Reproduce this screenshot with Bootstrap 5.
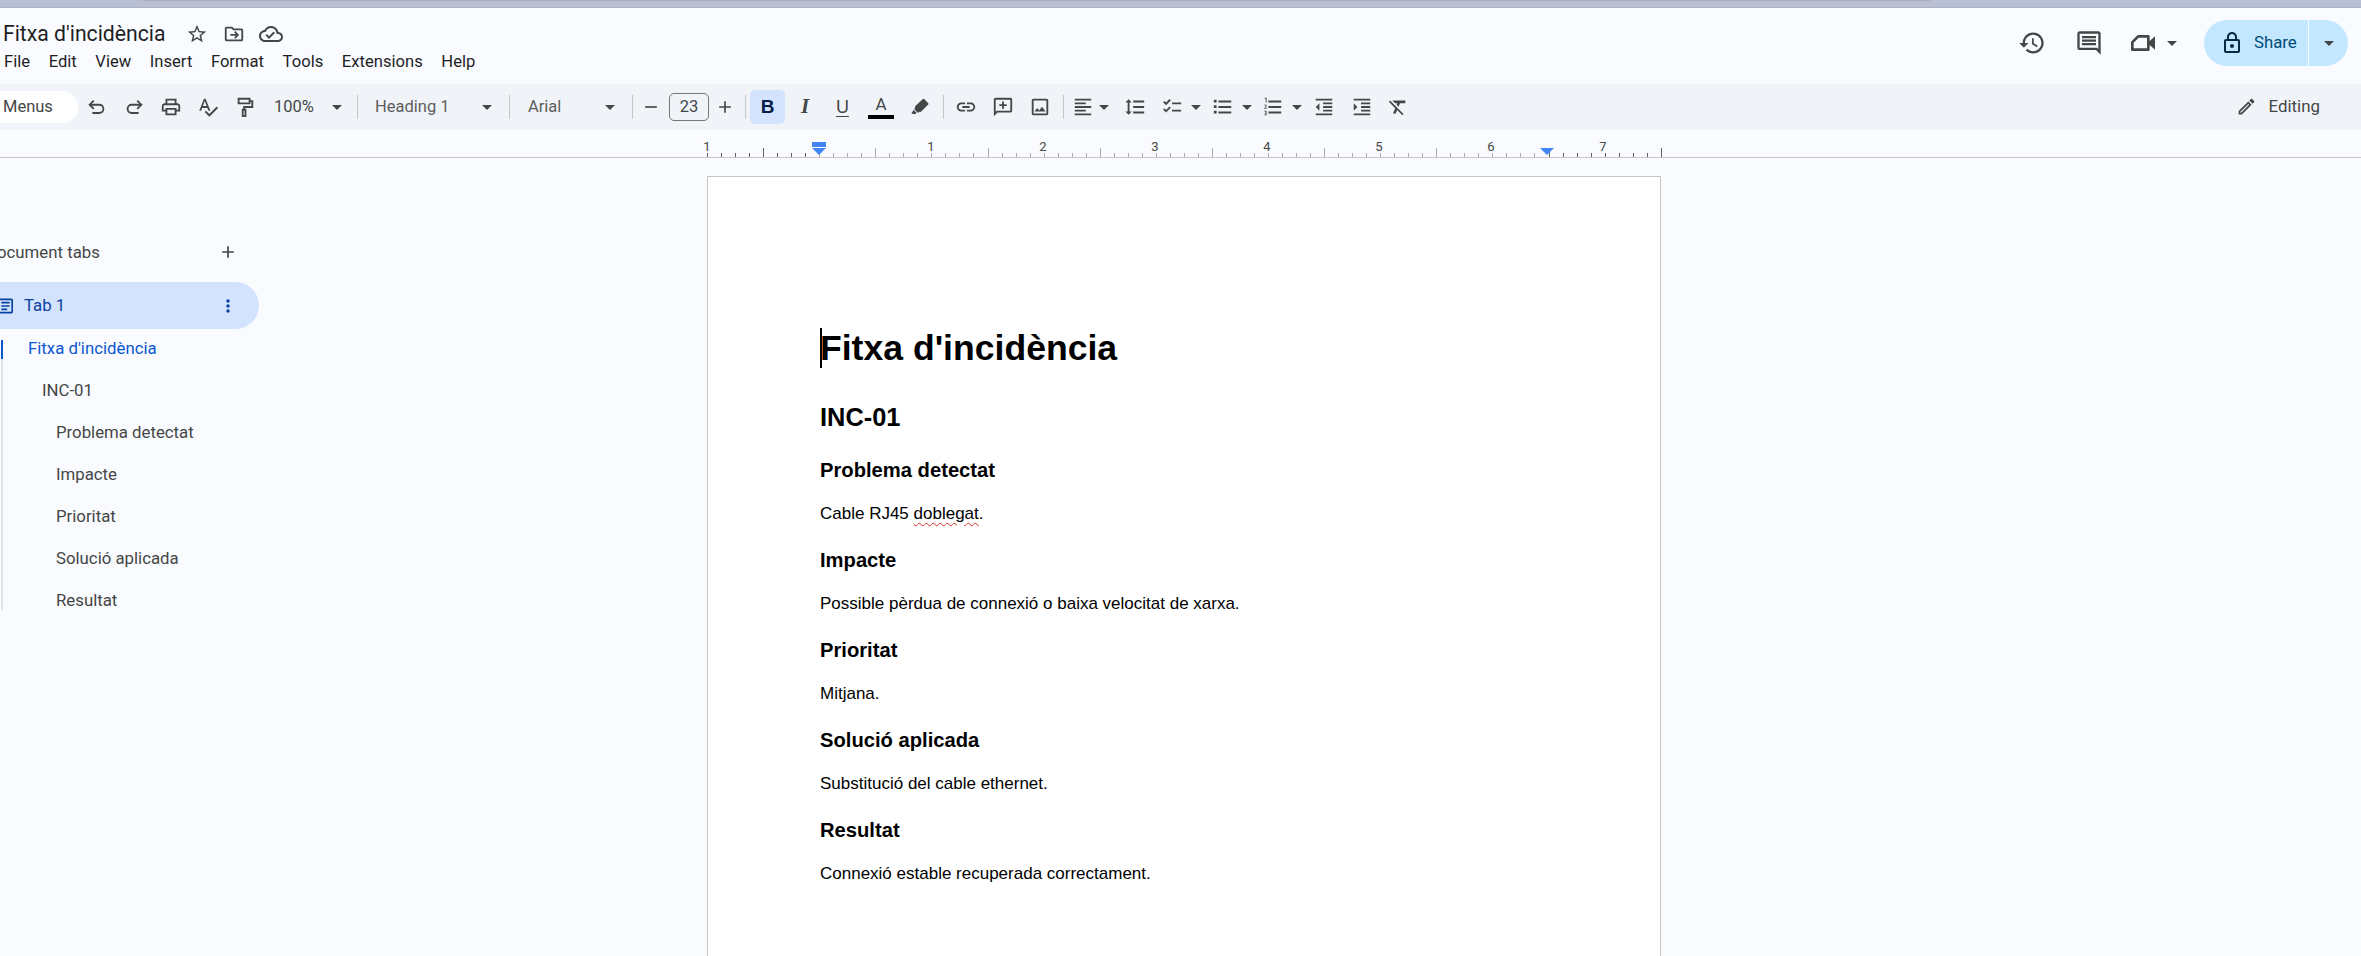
<!DOCTYPE html>
<html lang="en">
<head>
<meta charset="UTF-8">
<title>Fitxa d'incidència</title>
<link href="https://cdn.jsdelivr.net/npm/bootstrap@5.3.0/dist/css/bootstrap.min.css" rel="stylesheet">
<style>
    html, body { height: 956px; overflow: hidden; }
    body { background: #f9fbff; color: #444746; font-family: Roboto, "Liberation Sans", sans-serif; }
    svg { display: block; fill: currentColor; }

    .top-band { height: 8px; background: #b9c0d3; border-bottom: 1px solid #adb3c6; }
    .top-shade { height: 1px; margin: 0 431px 0 143px; background: #a9aebf; }
    .app-head { height: 76px; padding: 12px 13px 0 3px; }
    .doc-title { font-size: 21.2px; line-height: 28px; color: #1f1f1f; width: 175px; }
    .head-ic { width: 37px; height: 28px; color: #444746; }
    .menu-row { font-size: 16.6px; line-height: 24px; color: #1f1f1f; gap: 18.6px; padding: 2px 0 0 1px; }
    .head-right { height: 46px; padding-top: 0; }
    .rt-btn { width: 57px; color: #444746; }
    .cam-btn { width: 60px; }
    .share-btn { width: 144px; height: 46px; background: #c2e7ff; border-radius: 23px; margin-left: 27px; color: #004a77; font-size: 16.8px; font-weight: 450; }
    .share-main { width: 105px; padding-left: 17px; gap: 9px; border-right: 1px solid #f9fbff; height: 46px; }
    .share-drop { width: 39px; }
    .lock-ic { color: #0a2a43; margin-left: -1px; margin-right: 1px; }

    .tool-bar { height: 46px; background: #f0f4f9; font-size: 16.5px; }
    .menus-pill { width: 78px; height: 32px; background: #fff; border-radius: 0 16px 16px 0; padding-left: 3px; flex: none; }
    .tb-btn { width: 37px; height: 34px; flex: none; color: #444746; }
    .tb-sep { width: 1px; height: 24px; background: #c7c7c7; flex: none; }
    .tb-drop { height: 34px; flex: none; color: #444746; }
    .zoom-drop { width: 88px; padding: 0 9px 0 11px; }
    .style-drop { width: 142px; padding: 0 8px 0 17px; color: #5e5e5e; }
    .font-drop { width: 113px; padding: 0 8px 0 18px; color: #5e5e5e; }
    .tri { width: 0; height: 0; border-left: 5px solid transparent; border-right: 5px solid transparent; border-top: 5px solid #444746; flex: none; }
    .tri-slot { width: 10px; flex: none; }
    .size-minus { width: 36px; }
    .size-plus { width: 32px; }
    .size-box { width: 40px; height: 28px; border: 1px solid #747775; border-radius: 5px; font-size: 16.5px; flex: none; }
    .bold-on { width: 35px; background: #d3e3fd; border-radius: 5px; color: #041e49; }
    .glyph-b { font-family: "Liberation Sans", sans-serif; font-weight: 700; font-size: 19px; }
    .glyph-i { font-family: "Liberation Serif", serif; font-weight: 700; font-style: italic; font-size: 21px; width: 40px; }
    .glyph-u { font-family: "Liberation Sans", sans-serif; font-size: 18px; width: 35px; text-decoration: underline; text-underline-offset: 3px; }
    .glyph-a { font-family: "Roboto", sans-serif; font-size: 17px; width: 42px; line-height: 17px; }
    .glyph-a .a-bar { display: block; width: 26px; height: 4px; background: #000; margin-top: 2px; }
    .hl-btn { width: 35px; }
    .ms-5px { margin-left: 5px; }
    .ms-9px { margin-left: 9px; }
    .ms-6px { margin-left: 6px; }
    .ms-3px { margin-left: 3px; }
    .ms-7px { margin-left: 7px; }
    .ms-1px { margin-left: 1px; }
    .w-32px { width: 32px; }
    .w-38px { width: 38px; }
    .w-36px { width: 36px; }
    .w-35px { width: 35px; }
    .edit-mode { margin-left: auto; padding-right: 41px; gap: 11px; font-size: 16.9px; color: #444746; }

    .ruler-strip { height: 28px; border-bottom: 1px solid #c7c7c7; }

    .side-col { width: 707px; flex: none; padding-top: 82px; }
    .side-head { width: 259px; height: 24px; font-size: 16.8px; line-height: 24px; font-weight: 450; color: #444746; padding-right: 21px; margin-bottom: 18px; }
    .side-head span { margin-left: -14px; }
    .tab-pill { width: 259px; height: 47px; background: #d3e3fd; border-radius: 0 24px 24px 0; color: #0842a0; font-size: 16.8px; font-weight: 450; padding-right: 21px; margin-bottom: 11px; }
    .tab-ic { margin-left: -6px; margin-right: 7px; width: 23px; }
    .outline-box { margin-left: 1px; height: 270px; border-left: 2px solid #dde3ea; font-size: 16.8px; color: #444746; }
    .ol-row { line-height: 16px; margin-bottom: 26px; white-space: nowrap; }
    .ol-cur { margin-left: -2px; border-left: 2px solid #0b57d0; height: 19px; margin-bottom: 23px; color: #0b57d0; padding-left: 25px; }
    .ol-l2 { padding-left: 39px; }
    .ol-l3 { padding-left: 53px; }

    .doc-page { width: 954px; height: 800px; flex: none; margin-top: 18px; background: #fff; border: 1px solid #c7c7c7; border-bottom: 0; padding: 141px 0 0 112px; color: #000; font-family: "Liberation Sans", Arial, sans-serif; }
    .doc-page h1 { font-size: 35.6px; line-height: 60px; font-weight: 700; margin: 0 0 19px; }
    .doc-caret { border-left: 2px solid #000; margin-right: -2px; }
    .doc-page h2 { font-size: 25.4px; line-height: 40px; font-weight: 700; margin: 0 0 18px; }
    .doc-page h3 { font-size: 20.2px; line-height: 30px; font-weight: 700; margin: 0 0 17px; }
    .doc-page p { font-size: 17px; line-height: 24px; margin: 0 0 19px; }
    .spell-err { text-decoration: underline wavy #d93025 1px; text-underline-offset: 3px; }
</style>
</head>
<body>

<div class="top-band"><div class="top-shade"></div></div>

<header class="app-head d-flex justify-content-between">
    <div>
        <div class="d-flex align-items-center">
            <div class="doc-title">Fitxa d'incidència</div>
            <div class="head-ic d-flex align-items-center justify-content-center">
                <svg width="22" height="22" viewBox="0 0 24 24"><path d="M22 9.24l-7.19-.62L12 2 9.19 8.63 2 9.24l5.46 4.73L5.82 21 12 17.27 18.18 21l-1.63-7.03L22 9.24zM12 15.4l-3.76 2.27 1-4.28-3.32-2.88 4.38-.38L12 6.1l1.71 4.04 4.38.38-3.32 2.88 1 4.28L12 15.4z"/></svg>
            </div>
            <div class="head-ic d-flex align-items-center justify-content-center">
                <svg width="22" height="22" viewBox="0 0 24 24"><path d="M20 6h-8l-2-2H4c-1.1 0-2 .9-2 2v12c0 1.1.9 2 2 2h16c1.1 0 2-.9 2-2V8c0-1.1-.9-2-2-2zm0 12H4V6h5.17l2 2H20v10zM12.2 10l1.8 2H8v2h6l-1.8 2 1.4 1.2L17.5 13l-3.9-4.2z"/></svg>
            </div>
            <div class="head-ic d-flex align-items-center justify-content-center">
                <svg width="24" height="24" viewBox="0 0 24 24"><path d="M19.35 10.04C18.67 6.59 15.64 4 12 4 9.11 4 6.6 5.64 5.35 8.04 2.34 8.36 0 10.91 0 14c0 3.31 2.69 6 6 6h13c2.76 0 5-2.24 5-5 0-2.64-2.05-4.78-4.65-4.96zM19 18H6c-2.21 0-4-1.79-4-4 0-2.05 1.53-3.76 3.56-3.97l1.07-.11.5-.95C8.08 7.14 9.94 6 12 6c2.62 0 4.88 1.86 5.39 4.43l.3 1.5 1.53.11c1.56.1 2.78 1.41 2.78 2.96 0 1.65-1.35 3-3 3zm-9-3.82l-2.09-2.09L6.5 13.5 10 17l6.01-6.01-1.41-1.41z"/></svg>
            </div>
        </div>
        <div class="menu-row d-flex">
            <span>File</span><span>Edit</span><span>View</span><span>Insert</span><span>Format</span><span>Tools</span><span>Extensions</span><span>Help</span>
        </div>
    </div>
    <div class="head-right d-flex align-items-center">
        <div class="rt-btn d-flex justify-content-center">
            <svg width="28" height="28" viewBox="0 0 24 24"><path d="M13 3c-4.97 0-9 4.03-9 9H1l3.89 3.89.07.14L9 12H6c0-3.87 3.13-7 7-7s7 3.13 7 7-3.13 7-7 7c-1.93 0-3.68-.79-4.94-2.06l-1.42 1.42C8.27 19.99 10.51 21 13 21c4.97 0 9-4.03 9-9s-4.03-9-9-9zm-1 5v5l4.28 2.54.72-1.21-3.5-2.08V8H12z"/></svg>
        </div>
        <div class="rt-btn d-flex justify-content-center">
            <svg width="28" height="28" viewBox="0 0 24 24"><path d="M20 2H4c-1.1 0-2 .9-2 2v12c0 1.1.9 2 2 2h14l4 4V4c0-1.1-.9-2-2-2zm0 15.17L18.83 16H4V4h16v13.17zM6 12h12v2H6zm0-3h12v2H6zm0-3h12v2H6z"/></svg>
        </div>
        <div class="cam-btn d-flex align-items-center justify-content-end gap-2">
            <svg width="32" height="32" viewBox="0 0 24 24"><path d="M8 6h8a1 1 0 0 1 1 1v3.5l4-3.5v10l-4-3.5V17a1 1 0 0 1-1 1H4a1 1 0 0 1-1-1v-6zm.8 2L5 11.8V16h10V8z"/></svg>
            <span class="tri"></span>
        </div>
        <div class="share-btn d-flex align-items-center">
            <div class="share-main d-flex align-items-center">
                <svg class="lock-ic" width="24" height="24" viewBox="0 0 24 24"><path d="M18 8h-1V6c0-2.76-2.24-5-5-5S7 3.24 7 6v2H6c-1.1 0-2 .9-2 2v10c0 1.1.9 2 2 2h12c1.1 0 2-.9 2-2V10c0-1.1-.9-2-2-2zM9 6c0-1.66 1.34-3 3-3s3 1.34 3 3v2H9V6zm9 14H6V10h12v10zm-6-3c1.1 0 2-.9 2-2s-.9-2-2-2-2 .9-2 2 .9 2 2 2z"/></svg>
                <span>Share</span>
            </div>
            <div class="share-drop d-flex justify-content-center"><span class="tri"></span></div>
        </div>
    </div>
</header>

<div class="tool-bar d-flex align-items-center">
    <div class="menus-pill d-flex align-items-center">Menus</div>

    <div class="tb-btn d-flex align-items-center justify-content-center">
        <svg width="22" height="22" viewBox="0 0 24 24" fill="none" stroke="currentColor" stroke-width="2"><path d="M4.5 9.5h10a4.5 4.5 0 0 1 0 9H7" fill="none"/><path d="M8.5 5 4 9.5 8.5 14" fill="none"/></svg>
    </div>
    <div class="tb-btn d-flex align-items-center justify-content-center">
        <svg width="22" height="22" viewBox="0 0 24 24" fill="none" stroke="currentColor" stroke-width="2"><path d="M19.5 9.5h-10a4.5 4.5 0 0 0 0 9H17" fill="none"/><path d="M15.5 5 20 9.5 15.5 14" fill="none"/></svg>
    </div>
    <div class="tb-btn d-flex align-items-center justify-content-center">
        <svg width="22" height="22" viewBox="0 0 24 24"><path d="M19 8h-1V3H6v5H5c-1.66 0-3 1.34-3 3v6h4v4h12v-4h4v-6c0-1.66-1.34-3-3-3zM8 5h8v3H8V5zm8 12v2H8v-4h8v2zm2-2v-2H6v2H4v-4c0-.55.45-1 1-1h14c.55 0 1 .45 1 1v4h-2z"/></svg>
    </div>
    <div class="tb-btn d-flex align-items-center justify-content-center">
        <svg width="22" height="22" viewBox="0 0 24 24"><path d="M12.45 16h2.09L9.43 3H7.57L2.46 16h2.09l1.12-3h5.64l1.14 3zm-6.02-5L8.5 5.48 10.57 11H6.43zm15.16.59l-8.09 8.09L9.83 16l-1.41 1.41 5.09 5.09L23 13l-1.41-1.41z"/></svg>
    </div>
    <div class="tb-btn d-flex align-items-center justify-content-center">
        <svg width="22" height="22" viewBox="0 0 24 24" fill="none" stroke="currentColor" stroke-width="2"><path d="M5 3h12v5H5z" fill="none"/><path d="M17 5.5h3V12h-9v3" fill="none"/><path d="M9.5 15h3v7h-3z" fill="none"/></svg>
    </div>

    <div class="tb-drop zoom-drop d-flex align-items-center justify-content-between"><span>100%</span><span class="tri"></span></div>
    <div class="tb-sep ms-6px"></div>
    <div class="tb-drop style-drop d-flex align-items-center justify-content-between"><span>Heading 1</span><span class="tri"></span></div>
    <div class="tb-sep ms-9px"></div>
    <div class="tb-drop font-drop d-flex align-items-center justify-content-between"><span>Arial</span><span class="tri"></span></div>
    <div class="tb-sep ms-9px"></div>

    <div class="tb-btn size-minus d-flex align-items-center justify-content-center">
        <svg width="20" height="20" viewBox="0 0 24 24"><path d="M5 11h14v2H5z"/></svg>
    </div>
    <div class="size-box d-flex align-items-center justify-content-center">23</div>
    <div class="tb-btn size-plus d-flex align-items-center justify-content-center">
        <svg width="20" height="20" viewBox="0 0 24 24"><path d="M19 13h-6v6h-2v-6H5v-2h6V5h2v6h6z"/></svg>
    </div>
    <div class="tb-sep ms-1"></div>

    <div class="tb-btn bold-on glyph-b ms-1 d-flex align-items-center justify-content-center">B</div>
    <div class="tb-btn glyph-i d-flex align-items-center justify-content-center">I</div>
    <div class="tb-btn glyph-u d-flex align-items-center justify-content-center">U</div>
    <div class="tb-btn glyph-a d-flex flex-column align-items-center justify-content-center">A<span class="a-bar"></span></div>
    <div class="tb-btn hl-btn d-flex align-items-center justify-content-center">
        <svg width="22" height="22" viewBox="0 0 24 24"><path d="M16.6 3.4 21 7.8a1 1 0 0 1 0 1.4l-8.2 8.2-1.6-.2-1.3 1.3-4.4-4.4 1.3-1.3-.2-1.6L15.2 3.4a1 1 0 0 1 1.4 0zM5 15.2 2.5 19l4 1 1.8-1.8z"/></svg>
    </div>
    <div class="tb-sep ms-6px"></div>

    <div class="tb-btn ms-3px d-flex align-items-center justify-content-center">
        <svg width="22" height="22" viewBox="0 0 24 24"><path d="M3.9 12c0-1.71 1.39-3.1 3.1-3.1h4V7H7c-2.76 0-5 2.24-5 5s2.24 5 5 5h4v-1.9H7c-1.71 0-3.1-1.39-3.1-3.1zM8 13h8v-2H8v2zm9-6h-4v1.9h4c1.71 0 3.1 1.39 3.1 3.1s-1.39 3.1-3.1 3.1h-4V17h4c2.76 0 5-2.24 5-5s-2.24-5-5-5z"/></svg>
    </div>
    <div class="tb-btn d-flex align-items-center justify-content-center">
        <svg width="22" height="22" viewBox="0 0 24 24"><path d="M20 2H4c-1.1 0-2 .9-2 2v18l4-4h14c1.1 0 2-.9 2-2V4c0-1.1-.9-2-2-2zm0 14H5.17L4 17.17V4h16v12zm-9-2h2v-3h3V9h-3V6h-2v3H8v2h3z"/></svg>
    </div>
    <div class="tb-btn d-flex align-items-center justify-content-center">
        <svg width="22" height="22" viewBox="0 0 24 24"><path d="M19 5v14H5V5h14m0-2H5c-1.1 0-2 .9-2 2v14c0 1.1.9 2 2 2h14c1.1 0 2-.9 2-2V5c0-1.1-.9-2-2-2zm-4.86 8.86l-3 3.87L9 13.14 6 17h12l-3.86-5.14z"/></svg>
    </div>
    <div class="tb-sep ms-5px"></div>

    <div class="tb-btn w-32px ms-3px d-flex align-items-center justify-content-center">
        <svg width="22" height="22" viewBox="0 0 24 24"><path d="M3 3h18v2H3zm0 4h12v2H3zm0 4h18v2H3zm0 4h12v2H3zm0 4h18v2H3z"/></svg>
    </div>
    <div class="tri-slot d-flex justify-content-center"><span class="tri"></span></div>
    <div class="tb-btn ms-7px d-flex align-items-center justify-content-center">
        <svg width="22" height="22" viewBox="0 0 24 24"><path d="M6 7h2.5L5 3.5 1.5 7H4v10H1.5L5 20.5 8.5 17H6V7zm4-2v2h12V5H10zm0 14h12v-2H10v2zm0-6h12v-2H10v2z"/></svg>
    </div>
    <div class="tb-btn w-38px d-flex align-items-center justify-content-center">
        <svg width="22" height="22" viewBox="0 0 24 24"><path d="M12 7h10v2H12zm0 8h10v2H12zM5.5 10 2.3 6.8l1.4-1.4 1.8 1.8 3.8-3.8 1.4 1.4zm0 8-3.2-3.2 1.4-1.4 1.8 1.8 3.8-3.8 1.4 1.4z"/></svg>
    </div>
    <div class="tri-slot d-flex justify-content-center"><span class="tri"></span></div>
    <div class="tb-btn ms-3px d-flex align-items-center justify-content-center">
        <svg width="22" height="22" viewBox="0 0 24 24"><path d="M7 5h14v2H7zm0 6h14v2H7zm0 6h14v2H7z"/><path d="M2 4h3v3H2zm0 6h3v3H2zm0 6h3v3H2z"/></svg>
    </div>
    <div class="tri-slot ms-1px d-flex justify-content-center"><span class="tri"></span></div>
    <div class="tb-btn w-36px ms-3px d-flex align-items-center justify-content-center">
        <svg width="22" height="22" viewBox="0 0 24 24"><path d="M7 5h14v2H7zm0 6h14v2H7zm0 6h14v2H7z"/><path d="M3 2h2v5H4V3H3zM2.5 9.5H5V12l-1.5 1.2H5V14H2.5v-1L4 11.6V10.3H2.5zM2.5 16H5v5H2.5v-.8H4v-1.2H3v-.8h1v-1.4H2.5z"/></svg>
    </div>
    <div class="tri-slot ms-1px d-flex justify-content-center"><span class="tri"></span></div>
    <div class="tb-btn w-38px ms-3px d-flex align-items-center justify-content-center">
        <svg width="22" height="22" viewBox="0 0 24 24"><path d="M11 17h10v-2H11v2zm-8-5l4 4V8l-4 4zm0 9h18v-2H3v2zM3 3v2h18V3H3zm8 6h10V7H11v2zm0 4h10v-2H11v2z"/></svg>
    </div>
    <div class="tb-btn d-flex align-items-center justify-content-center">
        <svg width="22" height="22" viewBox="0 0 24 24"><path d="M3 21h18v-2H3v2zM3 8v8l4-4-4-4zm8 9h10v-2H11v2zM3 3v2h18V3H3zm8 6h10V7H11v2zm0 4h10v-2H11v2z"/></svg>
    </div>
    <div class="tb-btn w-35px d-flex align-items-center justify-content-center">
        <svg width="22" height="22" viewBox="0 0 24 24"><path d="M3.27 5L2 6.27l6.97 6.97L6.5 19h3l1.57-3.66L16.73 21 18 19.73 3.55 5.27 3.27 5zM6 5v.18L8.82 8h2.4l-.72 1.68 2.1 2.1L14.21 8H20V5H6z"/></svg>
    </div>

    <div class="edit-mode d-flex align-items-center">
        <svg width="21" height="21" viewBox="0 0 24 24"><path d="M3 17.25V21h3.75L17.81 9.94l-3.75-3.75L3 17.25zM5.92 19H5v-.92l9.06-9.06.92.92L5.92 19zM20.71 7.04a.996.996 0 0 0 0-1.41l-2.34-2.34a.996.996 0 0 0-1.41 0l-1.83 1.83 3.75 3.75 1.83-1.83z"/></svg>
        <span>Editing</span>
    </div>
</div>

<div class="ruler-strip">
    <svg id="rulerSvg" width="2361" height="27" viewBox="0 130 2361 27"></svg>
</div>

<main class="d-flex">
    <aside class="side-col">
        <div class="side-head d-flex align-items-center justify-content-between">
            <span>Document tabs</span>
            <svg width="20" height="20" viewBox="0 0 24 24"><path d="M19 13h-6v6h-2v-6H5v-2h6V5h2v6h6z"/></svg>
        </div>
        <div class="tab-pill d-flex align-items-center">
            <svg class="tab-ic" width="20" height="20" viewBox="0 0 24 24"><path d="M19 3H5c-1.1 0-2 .9-2 2v14c0 1.1.9 2 2 2h14c1.1 0 2-.9 2-2V5c0-1.1-.9-2-2-2zm0 16H5V5h14v14zM7 7h10v2H7zm0 4h10v2H7zm0 4h7v2H7z"/></svg>
            <span>Tab 1</span>
            <svg class="ms-auto" width="20" height="20" viewBox="0 0 24 24"><path d="M12 8c1.1 0 2-.9 2-2s-.9-2-2-2-2 .9-2 2 .9 2 2 2zm0 2c-1.1 0-2 .9-2 2s.9 2 2 2 2-.9 2-2-.9-2-2-2zm0 6c-1.1 0-2 .9-2 2s.9 2 2 2 2-.9 2-2-.9-2-2-2z"/></svg>
        </div>
        <div class="outline-box">
            <div class="ol-row ol-cur">Fitxa d'incidència</div>
            <div class="ol-row ol-l2">INC-01</div>
            <div class="ol-row ol-l3">Problema detectat</div>
            <div class="ol-row ol-l3">Impacte</div>
            <div class="ol-row ol-l3">Prioritat</div>
            <div class="ol-row ol-l3">Solució aplicada</div>
            <div class="ol-row ol-l3">Resultat</div>
        </div>
    </aside>

    <article class="doc-page">
        <h1><span class="doc-caret"></span>Fitxa d'incidència</h1>
        <h2>INC-01</h2>
        <h3>Problema detectat</h3>
        <p>Cable RJ45 <span class="spell-err">doblegat</span>.</p>
        <h3>Impacte</h3>
        <p>Possible pèrdua de connexió o baixa velocitat de xarxa.</p>
        <h3>Prioritat</h3>
        <p>Mitjana.</p>
        <h3>Solució aplicada</h3>
        <p>Substitució del cable ethernet.</p>
        <h3>Resultat</h3>
        <p>Connexió estable recuperada correctament.</p>
    </article>
</main>

<script>
    // ruler ticks and numbers, 112.2px per inch, page starts at x=707
    var svg = document.getElementById("rulerSvg");
    var inch = 112.2, left = 707, bottom = 157;
    var marks = "";
    for (var i = 0; i <= 68; i++) {
        var x = Math.round(left + i * inch / 8) + 0.5;
        var len = i % 8 == 4 ? 9 : 4;
        if (i == 68) len = 9;
        var dark = x < 819 || x > 1547;
        marks += '<path d="M' + x + ' ' + bottom + 'v-' + len + '" stroke="' + (dark ? '#5f6368' : '#a8abb0') + '" fill="none"/>';
    }
    for (var n = -1; n <= 7; n++) {
        if (n == 0) continue;
        var tx = 819 + n * 112;
        marks += '<text x="' + tx + '" y="151" text-anchor="middle" font-size="13" font-family="Roboto, sans-serif" fill="#444746">' + Math.abs(n) + '</text>';
    }
    marks += '<rect x="812" y="142" width="14" height="5" fill="#4285f4"/>';
    marks += '<path d="M812 148h14l-7 7z" fill="#4285f4"/>';
    marks += '<path d="M1540 148h14l-7 7z" fill="#4285f4"/>';
    svg.innerHTML = marks;
</script>

<script src="https://cdn.jsdelivr.net/npm/bootstrap@5.3.0/dist/js/bootstrap.bundle.min.js"></script>
</body>
</html>
